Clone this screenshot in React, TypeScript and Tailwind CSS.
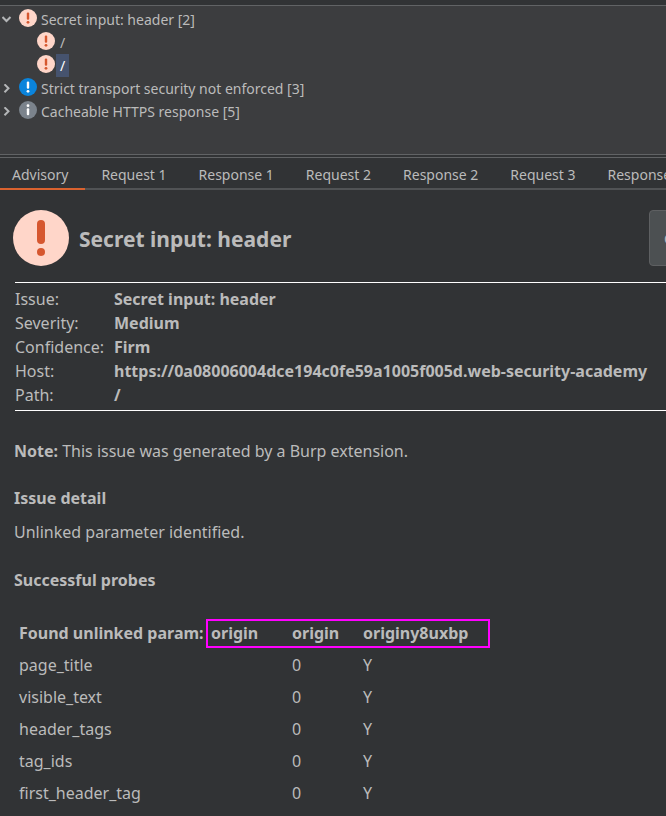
const tree = [
  { label: "Secret input: header [2]", kind: "medium", arrow: "down", child: false, selected: false },
  { label: "/", kind: "medium", arrow: "", child: true, selected: false },
  { label: "/", kind: "medium", arrow: "", child: true, selected: true },
  { label: "Strict transport security not enforced [3]", kind: "low", arrow: "right", child: false, selected: false },
  { label: "Cacheable HTTPS response [5]", kind: "info", arrow: "right", child: false, selected: false },
];

const tabs = ["Request 1", "Response 1", "Request 2", "Response 2", "Request 3", "Response 3"];

const details = [
  ["Issue:", "Secret input: header"],
  ["Severity:", "Medium"],
  ["Confidence:", "Firm"],
  ["Host:", "https://0a08006004dce194c0fe59a1005f005d.web-security-academy"],
  ["Path:", "/"],
];

const probes = ["page_title", "visible_text", "header_tags", "tag_ids", "first_header_tag"];

function SeverityIcon({ kind }: { kind: string }) {
  const fill = kind === "medium" ? "#ffd6c9" : kind === "low" ? "#0a84dc" : "#7b838c";
  const mark = kind === "medium" ? "#d6572f" : "#ffffff";
  return (
    <svg viewBox="0 0 18 18" className="mb-1 size-[18px] shrink-0" aria-hidden="true">
      <circle cx="9" cy="9" r="9" fill={fill} />
      {kind === "info" ? (
        <>
          <circle cx="9" cy="4.7" r="1.4" fill={mark} />
          <rect x="7.8" y="7.2" width="2.4" height="7" rx="1" fill={mark} />
        </>
      ) : (
        <>
          <rect x="7.8" y="3.4" width="2.4" height="7.4" rx="1.1" fill={mark} />
          <circle cx="9" cy="13.3" r="1.4" fill={mark} />
        </>
      )}
    </svg>
  );
}

function Chevron({ direction }: { direction: string }) {
  return (
    <svg viewBox="0 0 10 10" className="size-[10px]" fill="none" stroke="#b4b6b8" strokeWidth="2" aria-hidden="true">
      <path d={direction === "down" ? "M0.5 2 L4.5 6 L8.5 2" : "M2.5 0.3 L6.5 4.3 L2.5 8.3"} />
    </svg>
  );
}

export default function App() {
  return (
    <div className="flex min-h-screen flex-col overflow-hidden bg-[#313335] font-['Noto_Sans','Open_Sans',sans-serif] whitespace-nowrap text-[#bbbbbb]">
      <section className="mt-[5px] h-[150px] border-y border-[#616365] bg-[#3c3d3f] pt-[2px]">
        <ul className="text-[14px] leading-[23px]">
          {tree.map((item, i) => (
            <li key={i} className={item.child ? "flex h-[23px] items-center pl-[37px]" : "flex h-[23px] items-center pl-[2px]"}>
              {!item.child && (
                <button className="mr-[7px] flex w-[10px] items-center" aria-label="Toggle issue group">
                  <Chevron direction={item.arrow} />
                </button>
              )}
              <SeverityIcon kind={item.kind} />
              <span className={item.selected ? "ml-px bg-[#46536e] px-1 text-white" : item.child ? "ml-px px-1" : "ml-px px-[3px]"}>{item.label}</span>
            </li>
          ))}
        </ul>
      </section>

      <nav className="mt-[2px] flex h-[33px] border-t border-b-2 border-t-[#616365] border-b-[#515355] text-[14px]">
        <button className="-mb-[2px] shrink-0 border-b-2 border-[#d9622f] pt-[2px] pr-[17px] pl-3">Advisory</button>
        {tabs.map((tab) => (
          <button key={tab} className="shrink-0 px-4 pt-[2px]">{tab}</button>
        ))}
      </nav>

      <main className="pb-2 text-[16px] leading-6">
        <header className="flex items-center pt-5 pl-[13px]">
          <svg viewBox="0 0 56 56" className="size-14 shrink-0" aria-hidden="true">
            <circle cx="28" cy="28" r="28" fill="#ffd6c9" />
            <rect x="24" y="10" width="8" height="24" rx="4" fill="#d6572f" />
            <circle cx="28" cy="42" r="4" fill="#d6572f" />
          </svg>
          <h1 className="ml-[10px] w-[570px] shrink-0 pt-[2px] text-[21px] font-bold">Secret input: header</h1>
          <button className="h-14 shrink-0 rounded-[4px] border border-[#5e6062] bg-[#4c5052] px-[14px] pt-[2px] text-[14px]">Copy</button>
        </header>

        <dl className="mt-4 ml-[15px] border-y border-white pt-1 pb-[3px]">
          {details.map(([term, value]) => (
            <div key={term} className="flex">
              <dt className="w-[99px] shrink-0">{term}</dt>
              <dd className="font-bold">{value}</dd>
            </div>
          ))}
        </dl>

        <div className="pl-[14px]">
          <p className="mt-7">
            <b>Note:</b> This issue was generated by a Burp extension.
          </p>
          <h2 className="mt-[23px] font-bold">Issue detail</h2>
          <p className="mt-[10px]">Unlinked parameter identified.</p>
          <h2 className="mt-6 font-bold">Successful probes</h2>
          <table className="mt-[25px] table-fixed text-left">
            <thead>
              <tr className="h-8">
                <th className="w-[192px] pl-[5px]">Found unlinked param:</th>
                <th colSpan={3} className="w-[284px] p-0">
                  <span className="flex border-2 border-[#ff00ff] leading-[25px]">
                    <span className="w-[81px] pl-[3px]">origin</span>
                    <span className="w-[71px] pl-[3px]">origin</span>
                    <span className="pl-[3px]">originy8uxbp</span>
                  </span>
                </th>
              </tr>
            </thead>
            <tbody>
              {probes.map((probe) => (
                <tr key={probe} className="h-8">
                  <td className="pl-[5px]">{probe}</td>
                  <td className="w-[81px]" />
                  <td className="w-[71px] pl-[5px]">0</td>
                  <td className="pl-[5px]">Y</td>
                </tr>
              ))}
            </tbody>
          </table>
        </div>
      </main>
    </div>
  );
}
